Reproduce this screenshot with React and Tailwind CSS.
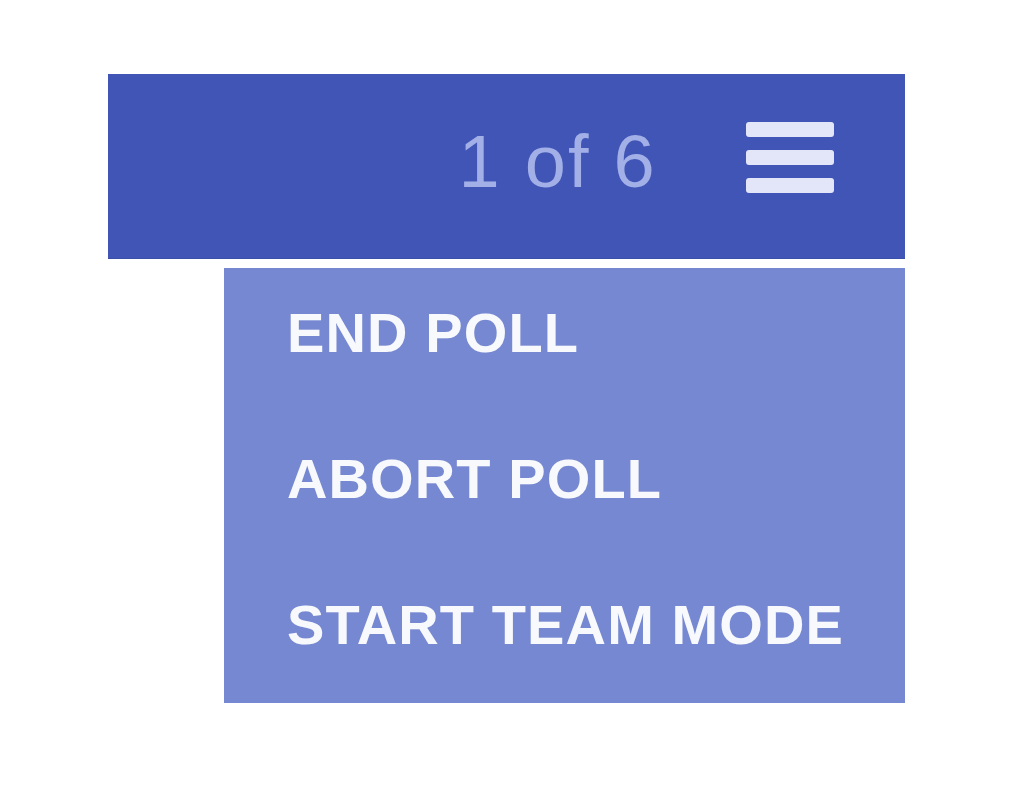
export default function App() {
  return (
    <div className="w-[1024px] h-[789px] bg-white pt-[74px] pl-[108px]" style={{ fontFamily: '"Liberation Sans", Arial, sans-serif' }}>
      <div className="w-[797px] h-[184px] bg-[#4055b5] flex justify-end items-start pr-[71px] shadow-[0_1px_0_#3a4fa8]">
        <span className="mt-[51px] text-[74px] leading-none tracking-[0.03em] text-[#a3b0e8] mr-[89px]">1 of 6</span>
        <div className="mt-[48px] w-[88px] flex flex-col gap-[13px]">
          <div className="h-[15px] rounded-[3px] bg-[#e3e6f8]" />
          <div className="h-[15px] rounded-[3px] bg-[#e3e6f8]" />
          <div className="h-[15px] rounded-[3px] bg-[#e3e6f8]" />
        </div>
      </div>
      <div className="mt-[10px] ml-[116px] w-[681px] h-[435px] bg-[#7688d1] pt-[37px] pl-[63px] flex flex-col gap-[90px]">
        <div className="text-[56px] leading-none font-bold tracking-[0.02em] text-[#f8f9fd]">END POLL</div>
        <div className="text-[56px] leading-none font-bold tracking-[0.02em] text-[#f8f9fd]">ABORT POLL</div>
        <div className="text-[56px] leading-none font-bold tracking-[0.02em] text-[#f8f9fd]">START TEAM MODE</div>
      </div>
    </div>
  );
}
